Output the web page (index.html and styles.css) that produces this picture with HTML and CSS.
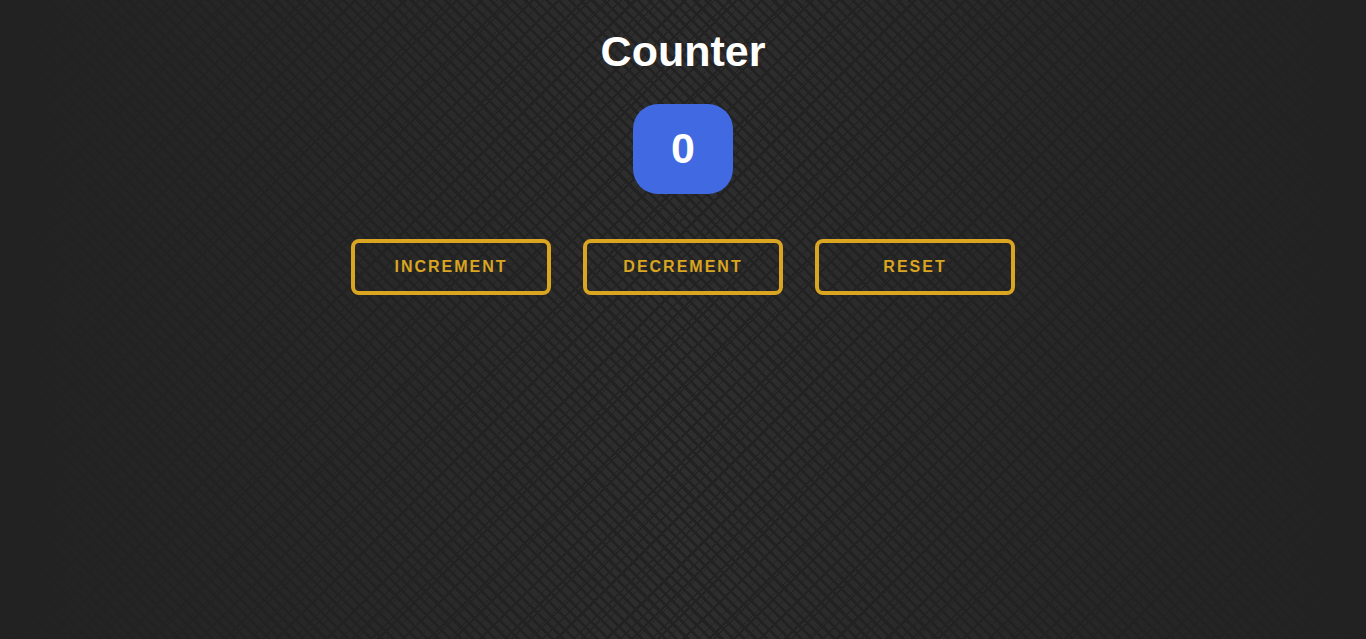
FILE: index.html
```html
<!DOCTYPE html>
<html lang="en">
<head>
<meta charset="utf-8">
<meta name="viewport" content="width=device-width, initial-scale=1">
<title>Counter</title>
<link rel="stylesheet" href="styles.css">
</head>
<body>
<main class="counter">
<h1 class="title">Counter</h1>
<output class="count" id="count">0</output>
<div class="actions">
<button class="btn" type="button">Increment</button>
<button class="btn" type="button">Decrement</button>
<button class="btn" type="button">Reset</button>
</div>
</main>
</body>
</html>
```
FILE: styles.css
```css
* { box-sizing: border-box; }
body {
  margin: 0;
  min-height: 100vh;
  font-family: "Liberation Sans", Arial, sans-serif;
  color: #fff;
  background:
    linear-gradient(90deg, #222, transparent 50%, #222),
    repeating-linear-gradient(45deg, transparent 0 5px, #222 5px 8px),
    repeating-linear-gradient(135deg, transparent 0 16px, #222 16px 18px),
    repeating-linear-gradient(135deg, transparent 0 10px, #222 10px 11px),
    #2e2e2e;
}
.counter {
  display: flex;
  flex-direction: column;
  align-items: center;
  padding: 25px 16px;
}
.title { margin: 0 0 27px; font-size: 43px; line-height: 52px; }
.count {
  display: grid;
  place-items: center;
  width: 100px;
  height: 90px;
  padding-bottom: 2px;
  border-radius: 25px;
  background: royalblue;
  font-size: 43px;
  font-weight: 700;
}
.actions {
  display: flex;
  flex-wrap: wrap;
  justify-content: center;
  gap: 32px;
  margin-top: 45px;
}
.btn {
  width: 200px;
  height: 56px;
  border: 4px solid goldenrod;
  border-radius: 8px;
  background: transparent;
  color: goldenrod;
  font: 700 16px "Liberation Sans", Arial, sans-serif;
  letter-spacing: 2px;
  text-transform: uppercase;
  cursor: pointer;
}
```
